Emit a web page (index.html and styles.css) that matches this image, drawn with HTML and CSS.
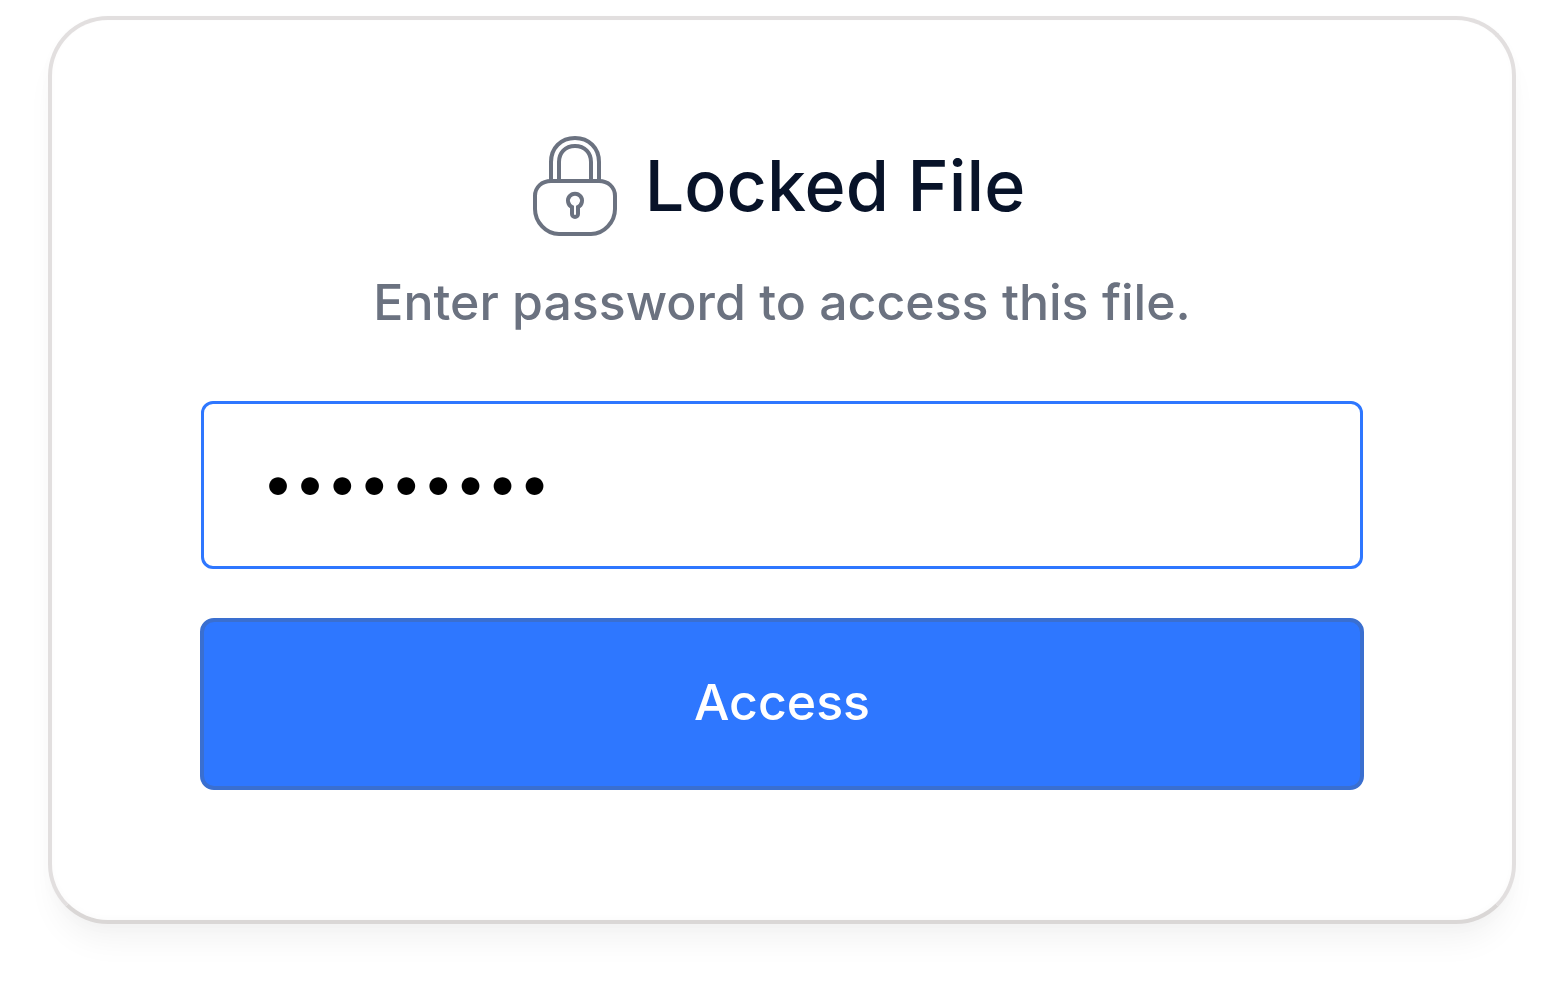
FILE: index.html
```html
<!DOCTYPE html>
<html lang="en">
<head>
<meta charset="utf-8">
<meta name="viewport" content="width=device-width, initial-scale=1">
<title>Locked File</title>
<link rel="stylesheet" href="styles.css">
</head>
<body>
<main class="card">
  <header class="heading">
    <svg class="lock" viewBox="0 0 84 100" fill="none" stroke="currentColor" stroke-width="4" aria-hidden="true">
      <path d="M18 45V26C18 12 28 2 42 2s24 10 24 24v19"/>
      <path d="M26 45V26c0-9 6-16 16-16s16 7 16 16v19"/>
      <path d="M18 45h48c9 0 16 6 16 15v13c0 13-11 25-24 25H26C13 98 2 86 2 73V60c0-9 7-15 16-15z"/>
      <path d="M39 71a7 7 0 1 1 6 0v7a3 3 0 0 1-6 0z"/>
    </svg>
    <h1 class="title">Locked File</h1>
  </header>
  <form class="form">
    <label class="hint" for="password">Enter password to access this file.</label>
    <input class="password" id="password" type="password" value="password1" autocomplete="off">
    <button class="submit" type="button">Access</button>
  </form>
</main>
</body>
</html>
```

FILE: styles.css
```css
* {
  box-sizing: border-box;
}

body {
  margin: 0;
  padding: 16px 44px 76px 48px;
  background: #fff;
  font-family: Inter, "Liberation Sans", sans-serif;
}

.card {
  padding: 116px 148px 130px;
  border: 4px solid #e2dfdf;
  border-bottom-color: #dad7d6;
  border-radius: 60px;
  background: #fff;
  box-shadow: 0 24px 32px -8px rgba(0, 0, 0, 0.05), 0 4px 16px rgba(0, 0, 0, 0.015), inset 0 -2px 6px rgba(0, 0, 0, 0.02);
}

.heading {
  display: flex;
  align-items: center;
  justify-content: center;
  gap: 28px;
  padding-right: 6px;
}

.lock {
  width: 84px;
  height: 100px;
  color: #6b7280;
}

.title {
  margin: 0;
  font-size: 70px;
  font-weight: 500;
  line-height: 100px;
  color: #081329;
}

.form {
  display: flex;
  flex-direction: column;
}

.hint {
  margin: 32px 0 64px;
  font-size: 50px;
  font-weight: 500;
  line-height: 68px;
  text-align: center;
  color: #6b7280;
}

.password {
  height: 168px;
  margin: 1px;
  padding: 0 58px 6px;
  border: 3px solid #2e77ff;
  border-radius: 12px;
  outline: none;
  background: #fff;
  font-family: inherit;
  font-size: 57px;
  color: #000;
}

.submit {
  height: 172px;
  margin-top: 48px;
  padding: 0 0 4px;
  border: 4px solid #3a6fd0;
  border-radius: 14px;
  background: #2e77ff;
  font-family: inherit;
  font-size: 50px;
  font-weight: 500;
  color: #fff;
}
```
